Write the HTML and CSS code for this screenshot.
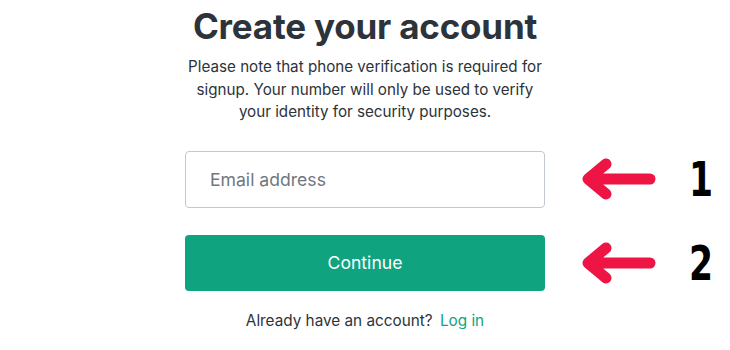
FILE: index.html
```html
<!DOCTYPE html>
<html>
<head>
<meta charset="utf-8">
<link rel="stylesheet" href="styles.css">
</head>
<body>
<main class="page">
  <h1 class="title">Create your account</h1>
  <p class="note">Please note that phone verification is required for signup. Your number will only be used to verify your identity for security purposes.</p>
  <div class="row row-email">
    <div class="field"><span class="placeholder">Email address</span></div>
    <div class="annot">
      <svg class="arrow" width="80" height="44" viewBox="0 0 80 44"><path d="M70 22 H9 M26 7 L8 22 L26 37" fill="none" stroke="#ee1443" stroke-width="11" stroke-linecap="round" stroke-linejoin="round"/></svg>
      <span class="num">1</span>
    </div>
  </div>
  <div class="row row-btn">
    <button class="btn">Continue</button>
    <div class="annot">
      <svg class="arrow" width="80" height="44" viewBox="0 0 80 44"><path d="M70 22 H9 M26 7 L8 22 L26 37" fill="none" stroke="#ee1443" stroke-width="11" stroke-linecap="round" stroke-linejoin="round"/></svg>
      <span class="num">2</span>
    </div>
  </div>
  <p class="login">Already have an account? <a class="link">Log in</a></p>
</main>
</body>
</html>
```
FILE: styles.css
```css
html, body { margin: 0; padding: 0; background: #fff; }
body { width: 730px; height: 350px; overflow: hidden; font-family: Inter, "Noto Sans", sans-serif; }
.page { width: 360px; margin: 0 auto; padding-top: 5px; display: flex; flex-direction: column; align-items: center; }
.title { margin: 0; font-size: 35px; font-weight: 700; color: #2d333a; line-height: 42px; letter-spacing: -0.2px; }
.note { margin: 9px 0 0; font-size: 15.2px; line-height: 22.5px; color: #2d333a; text-align: center; width: 372px; }
.row { position: relative; width: 360px; }
.row-email { margin-top: 27px; }
.row-btn { margin-top: 27px; }
.field { box-sizing: border-box; height: 57px; border: 1px solid #c2c8d0; border-radius: 4px; display: flex; align-items: center; padding-left: 24px; }
.placeholder { font-size: 17.6px; color: #6f7780; }
.btn { display: block; width: 360px; height: 56px; border: 0; border-radius: 4px; background: #10a37f; color: #fff; font-family: inherit; font-size: 17.6px; padding: 0; }
.annot { position: absolute; left: 395px; top: 6px; display: flex; align-items: center; gap: 26px; }
.arrow { display: block; }
.num { font-family: "DejaVu Sans Condensed", "DejaVu Sans", sans-serif; font-weight: 700; font-size: 48px; color: #000; line-height: 44px; transform: scaleX(0.8); }
.login { margin: 20px 0 0; font-size: 15.3px; color: #2d333a; }
.link { color: #10a37f; margin-left: 3px; }
```
